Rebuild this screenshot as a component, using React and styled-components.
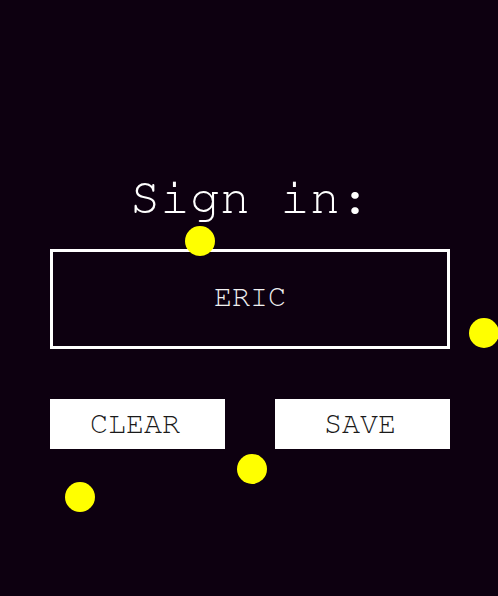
import React from 'react';
import styled, { createGlobalStyle } from 'styled-components';

const GlobalStyle = createGlobalStyle`
	html, body {
		margin: 0;
		padding: 0;
		background: #0d0010;
	}
	body {
		font-family: FreeMono, "Liberation Mono", "Courier New", monospace;
	}
`;

const Page = styled.div`
	position: relative;
	width: 498px;
	height: 596px;
	overflow: hidden;
	background: #0d0010;
`;

const Panel = styled.div`
	width: 400px;
	margin-left: 50px;
	padding-top: 171px;
	display: flex;
	flex-direction: column;
	align-items: stretch;
`;

const Title = styled.h1`
	margin: 0;
	font-size: 50px;
	font-weight: normal;
	line-height: 54px;
	color: #ffffff;
	text-align: center;
`;

const NameBox = styled.div`
	margin-top: 24px;
	height: 100px;
	box-sizing: border-box;
	border: 3px solid #ffffff;
	padding-bottom: 4px;
	display: flex;
	align-items: center;
	justify-content: center;
	color: #f0f0f0;
	font-size: 30px;
`;

const ButtonRow = styled.div`
	margin-top: 50px;
	display: flex;
	justify-content: space-between;
`;

const Button = styled.button`
	width: 175px;
	height: 50px;
	border: none;
	background: #ffffff;
	color: #1a1a1a;
	font-family: FreeMono, "Liberation Mono", "Courier New", monospace;
	font-size: 30px;
	padding: 0 5px 0 0;
	cursor: pointer;
`;

const Dot = styled.div`
	position: absolute;
	width: 30px;
	height: 30px;
	border-radius: 50%;
	background: #ffff00;
	left: ${p => p.x - 15}px;
	top: ${p => p.y - 15}px;
`;

const dots = [
	{ x: 200, y: 241 },
	{ x: 484, y: 333 },
	{ x: 252, y: 469 },
	{ x: 80, y: 497 },
];

export default function App() {
	return (
		<>
			<GlobalStyle />
			<Page>
				<Panel>
					<Title>Sign in:</Title>
					<NameBox>ERIC</NameBox>
					<ButtonRow>
						<Button>CLEAR</Button>
						<Button>SAVE</Button>
					</ButtonRow>
				</Panel>
				{dots.map((d, i) => (
					<Dot key={i} x={d.x} y={d.y} />
				))}
			</Page>
		</>
	);
}
